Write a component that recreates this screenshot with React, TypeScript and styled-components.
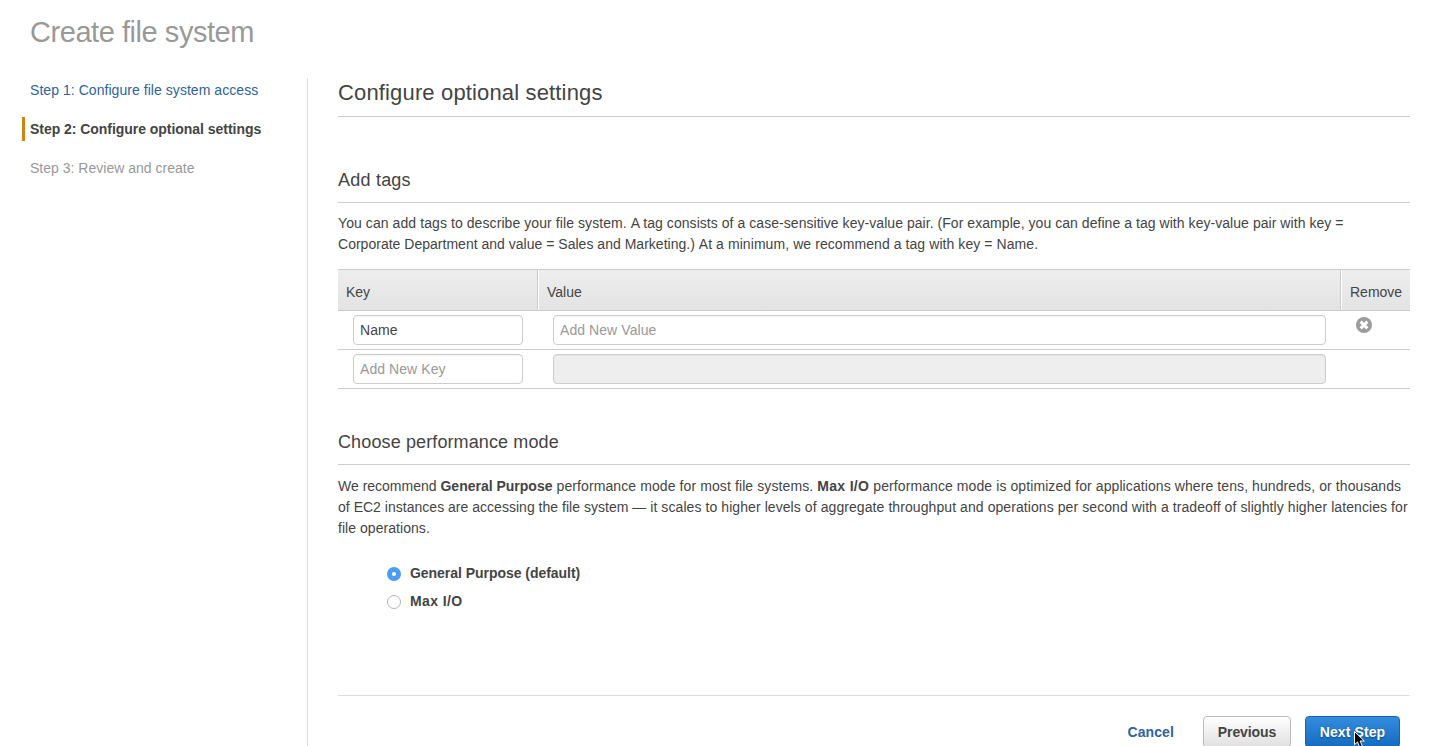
import React from "react";
import styled, { createGlobalStyle, css } from "styled-components";

const GlobalStyle = createGlobalStyle`
  *, *::before, *::after { box-sizing: border-box; }
  html, body { margin: 0; background: #fff; overflow: hidden; }
  body {
    font-family: "Liberation Sans", Arial, sans-serif;
    font-size: 14px;
    line-height: 21px;
    color: #444;
  }
`;

const Page = styled.div`
  position: relative;
  height: 746px;
  overflow: hidden;
  display: flex;
  flex-direction: column;
`;

const PageTitle = styled.h1`
  margin: 0;
  height: 78px;
  flex-shrink: 0;
  padding: 12px 0 0 30px;
  font-size: 29px;
  line-height: 40px;
  font-weight: 400;
  letter-spacing: -0.45px;
  color: #999;
`;

const Columns = styled.div`
  display: flex;
  flex: 1;
`;

const Steps = styled.ol`
  list-style: none;
  margin: 0;
  padding: 0 0 0 22px;
  width: 308px;
  border-right: 1px solid #ddd;
  display: flex;
  flex-direction: column;
  gap: 15px;
`;

const Step = styled.li<{ $state: "done" | "current" | "todo"; $spacing: number }>`
  height: 24px;
  line-height: 24px;
  padding-left: 5px;
  border-left: 3px solid transparent;
  letter-spacing: ${(p) => p.$spacing}px;
  white-space: nowrap;
  color: #999;
  ${(p) => p.$state === "done" && css`color: #2d63a0;`}
  ${(p) =>
    p.$state === "current" &&
    css`
      color: #444;
      font-weight: 700;
      border-left-color: #d5810f;
    `}
`;

const Main = styled.main`
  width: 1072px;
  margin-left: 30px;
  display: flex;
  flex-direction: column;
`;

const MainHeading = styled.h2`
  margin: 0 0 52px;
  height: 39px;
  line-height: 29px;
  font-size: 22px;
  font-weight: 400;
  letter-spacing: 0.15px;
  border-bottom: 1px solid #ccc;
`;

const SectionHeading = styled.h3<{ $spacing: number }>`
  margin: 0;
  height: 34px;
  line-height: 22px;
  font-size: 18px;
  font-weight: 400;
  letter-spacing: ${(p) => p.$spacing}px;
  border-bottom: 1px solid #ccc;
`;

const Paragraph = styled.p<{ $top: number }>`
  margin: ${(p) => p.$top}px 0 0;
`;

const Line = styled.span`
  display: block;
  white-space: nowrap;
`;

const Run = styled.span<{ $spacing: number }>`
  letter-spacing: ${(p) => p.$spacing}px;
`;

const TagTable = styled.div`
  margin: 14px 0 42px;
`;

const HeaderRow = styled.div`
  display: grid;
  grid-template-columns: 200px 803px 69px;
  height: 42px;
  border-top: 1px solid #ccc;
  border-bottom: 1px solid #ccc;
  background: linear-gradient(#eee, #e3e3e3);
`;

const HeaderCell = styled.div`
  height: 40px;
  padding: 2px 0 0 8px;
  line-height: 41px;
  & + & {
    border-left: 1px solid #fff;
    box-shadow: -1px 0 #ccc;
  }
`;

const TagRow = styled.div`
  display: grid;
  grid-template-columns: 170px 773px 16px;
  column-gap: 30px;
  padding: 4px 0 4px 15px;
  height: 39px;
  border-bottom: 1px solid #ccc;
`;

const Field = styled.input`
  width: 100%;
  height: 30px;
  padding: 0 6px;
  border: 1px solid #ccc;
  border-radius: 4px;
  background: #fff;
  box-shadow: inset 0 1px 1px rgba(0, 0, 0, 0.04);
  font: inherit;
  letter-spacing: 0.07px;
  color: #444;
  outline: none;
  &::placeholder { color: #999; opacity: 1; }
  &:disabled { background: #eee; }
`;

const RemoveButton = styled.button`
  width: 16px;
  height: 16px;
  margin: 2px 0 0;
  padding: 0;
  border: 0;
  background: none;
  svg { display: block; }
`;

const Options = styled.div`
  display: flex;
  flex-direction: column;
  gap: 7px;
  margin: 24px 0 0 49px;
`;

const Option = styled.label<{ $spacing: number }>`
  display: flex;
  align-items: center;
  height: 21px;
  gap: 9px;
  font-weight: 700;
  letter-spacing: ${(p) => p.$spacing}px;
`;

const Radio = styled.span<{ $checked?: boolean }>`
  width: 14px;
  height: 14px;
  margin-top: 1px;
  border-radius: 50%;
  border: 1px solid #b5b5b5;
  background: #fff;
  ${(p) =>
    p.$checked &&
    css`
      border: 5px solid #4a9df2;
    `}
`;

const Footer = styled.footer`
  display: flex;
  justify-content: flex-end;
  align-items: flex-start;
  height: 51px;
  margin-top: 83px;
  padding: 20px 10px 0 0;
  border-top: 1px solid #ddd;
  flex-shrink: 0;
`;

const Button = styled.button<{ $kind: "link" | "plain" | "primary" }>`
  height: 32px;
  padding: 0;
  border-radius: 4px;
  font: 700 14px/30px "Liberation Sans", Arial, sans-serif;
  letter-spacing: 0.1px;
  flex-shrink: 0;
  ${(p) =>
    p.$kind === "link" &&
    css`
      margin-right: 29px;
      border: 0;
      background: none;
      color: #2d63a0;
    `}
  ${(p) =>
    p.$kind === "plain" &&
    css`
      width: 88px;
      margin-right: 14px;
      border: 1px solid #bbb;
      background: linear-gradient(#fff, #e0e0e0);
      color: #444;
      letter-spacing: -0.1px;
    `}
  ${(p) =>
    p.$kind === "primary" &&
    css`
      width: 95px;
      border: 1px solid #1b62ad;
      background: linear-gradient(#348cdf, #136cc0);
      color: #fff;
      text-shadow: 0 1px 2px rgba(0, 0, 0, 0.4);
    `}
`;

const Pointer = styled.svg`
  position: absolute;
  left: 1353px;
  top: 730px;
`;

export default function App() {
  return (
    <Page>
      <GlobalStyle />
      <PageTitle>Create file system</PageTitle>
      <Columns>
        <Steps>
          <Step $state="done" $spacing={0.05}>Step 1: Configure file system access</Step>
          <Step $state="current" $spacing={-0.04}>Step 2: Configure optional settings</Step>
          <Step $state="todo" $spacing={0.01}>Step 3: Review and create</Step>
        </Steps>
        <Main>
          <MainHeading>Configure optional settings</MainHeading>
          <SectionHeading $spacing={0.22}>Add tags</SectionHeading>
          <Paragraph $top={10}>
            <Line>
              <Run $spacing={0.08}>You can add tags to describe your file system. </Run>
              <Run $spacing={0.05}>
                A tag consists of a case-sensitive key-value pair. (For example, you can define a tag with key-value pair with key =
              </Run>
            </Line>
            <Line>
              <Run $spacing={0.015}>Corporate Department and value = Sales and Marketing.) </Run>
              <Run $spacing={0.075}>At a minimum, we recommend a tag with key = Name.</Run>
            </Line>
          </Paragraph>
          <TagTable>
            <HeaderRow>
              <HeaderCell>Key</HeaderCell>
              <HeaderCell>Value</HeaderCell>
              <HeaderCell>Remove</HeaderCell>
            </HeaderRow>
            <TagRow>
              <Field defaultValue="Name" />
              <Field placeholder="Add New Value" />
              <RemoveButton aria-label="Remove">
                <svg width="16" height="16" viewBox="0 0 16 16">
                  <circle cx="8" cy="8" r="8" fill="#9c9c9c" />
                  <path d="M4.6 4.6l6.8 6.8M11.4 4.6l-6.8 6.8" stroke="#fff" strokeWidth="3" />
                </svg>
              </RemoveButton>
            </TagRow>
            <TagRow>
              <Field placeholder="Add New Key" />
              <Field disabled />
            </TagRow>
          </TagTable>
          <SectionHeading $spacing={0.12}>Choose performance mode</SectionHeading>
          <Paragraph $top={11}>
            <Line>
              We recommend <b>General Purpose</b>
              <Run $spacing={0.1}> performance mode for most file systems. </Run>
              <Run as="b" $spacing={0.32}>Max I/O</Run>
              <Run $spacing={0.09}>
                {" "}performance mode is optimized for applications where tens, hundreds, or thousands
              </Run>
            </Line>
            <Line>
              <Run $spacing={0.02}>of EC2 instances are accessing the file system — </Run>
              <Run $spacing={0.078}>
                it scales to higher levels of aggregate throughput and operations per second with a tradeoff of slightly higher latencies for
              </Run>
            </Line>
            <Line>
              <Run $spacing={0.05}>file operations.</Run>
            </Line>
          </Paragraph>
          <Options>
            <Option $spacing={-0.04}>
              <Radio $checked />
              General Purpose (default)
            </Option>
            <Option $spacing={0.38}>
              <Radio />
              Max I/O
            </Option>
          </Options>
          <Footer>
            <Button $kind="link">Cancel</Button>
            <Button $kind="plain">Previous</Button>
            <Button $kind="primary">Next Step</Button>
          </Footer>
        </Main>
      </Columns>
      <Pointer width="13" height="19" viewBox="0 0 13 19">
        <path
          d="M1.5 1.5v13.2l3-2.8 2.3 5.4 2.6-1.1-2.3-5.2h4.2z"
          fill="#000"
          stroke="#fff"
          strokeWidth="1"
        />
      </Pointer>
    </Page>
  );
}
